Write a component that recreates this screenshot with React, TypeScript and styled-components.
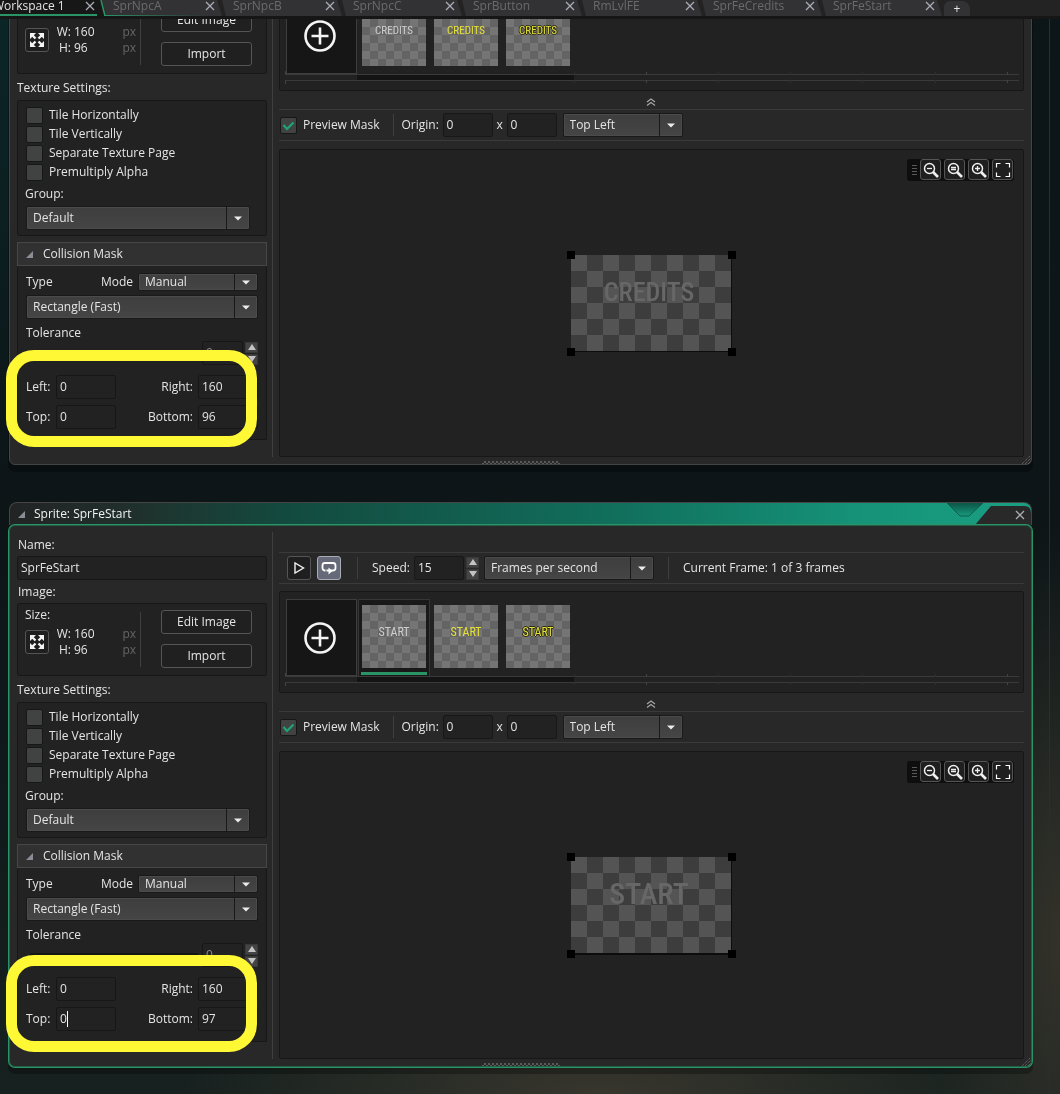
import React, { useId, useState } from "react";
import styled, { createGlobalStyle, css } from "styled-components";

const c = {
  text: "#e4e4e4",
  dim: "#6a6a6c",
  body: "#282828",
  panel: "#222222",
  edge: "#171717",
  line: "#3f3f3f",
  green: "#2b9467",
  yellow: "#fff835",
};

const Global = createGlobalStyle`
  * { box-sizing: border-box; }
  body {
    margin: 0;
    background: #0c1618;
    color: ${c.text};
    font-family: "Open Sans", "Noto Sans", sans-serif;
    font-size: 12px;
    line-height: 16px;
  }
  button, input, select { font: inherit; color: inherit; margin: 0; }
`;

/* ---------- shell ---------- */

const Page = styled.div`
  height: 100vh;
  display: flex;
  flex-direction: column;
  overflow: hidden;
`;

const TabBar = styled.nav`
  position: relative;
  z-index: 2;
  flex: none;
  display: flex;
  height: 19px;
  background: #232323;
  border-bottom: 3px solid #161616;
  overflow: hidden;
`;

const Tab = styled.div<{ $active?: boolean }>`
  flex: none;
  display: flex;
  align-items: center;
  justify-content: space-between;
  width: ${(p) => (p.$active ? 102 : 120)}px;
  height: 16px;
  padding: 0 7px 4px 11px;
  background: #323235;
  color: ${c.dim};
  white-space: nowrap;
  clip-path: polygon(0 0, calc(100% - 5px) 0, 100% 100%, 4px 100%);
  ${(p) =>
    p.$active &&
    css`
      padding: 0 7px 2px 0;
      background: #171718;
      color: ${c.text};
      border-bottom: 2px solid ${c.green};
      clip-path: polygon(0 0, 100% 0, 100% 100%, 0 100%);
    `}
`;

const ActiveEdge = styled.svg`
  position: absolute;
  left: 97px;
  top: 0;
`;

const TabName = styled.a<{ $shift?: boolean }>`
  color: inherit;
  text-decoration: none;
  margin-left: ${(p) => (p.$shift ? -7 : 0)}px;
`;

const PlainButton = styled.button`
  display: grid;
  place-items: center;
  padding: 0;
  border: 0;
  background: none;
  cursor: pointer;
`;

const AddTab = styled(PlainButton)`
  width: 26px;
  height: 15px;
  margin: 1px 0 0 2px;
  padding-bottom: 2px;
  background: #323235;
  border-radius: 6px 8px 0 0;
`;

const Workspace = styled.main`
  position: relative;
  flex: 1;
  overflow: hidden;
  margin-right: 10px;
  border-right: 1px solid #26302f;
`;

const Backdrop = styled.div`
  position: fixed;
  inset: 0;
  z-index: -1;
  background:
    radial-gradient(ellipse 420px 120px at 600px 100%, #38362d 0%, transparent 100%),
    radial-gradient(ellipse 130px 420px at 100% 86%, #33322a 0%, transparent 100%),
    radial-gradient(ellipse 180px 480px at 0 0, #0b2628 0%, transparent 100%),
    linear-gradient(180deg, #0c1618 0%, #0d1517 50%, #17211f 100%);
`;

/* ---------- windows ---------- */

const WindowFrame = styled.section`
  position: absolute;
  left: 9px;
  right: 17px;
`;

const TitleBar = styled.header<{ $active?: boolean }>`
  display: grid;
  grid-template-columns: 1fr 85px;
  height: 23px;
  border: 1px solid #454545;
  border-bottom: 0;
  border-radius: 8px 8px 0 0;
  overflow: hidden;
  background: ${(p) =>
    p.$active
      ? "linear-gradient(90deg, #222424 0%, #20302c 12%, #134a3f 27%, #11705d 60%, #159177 82%, #1a9f83 100%)"
      : "#2a2a2a"};
`;

const TitleText = styled.h2`
  display: flex;
  align-items: center;
  gap: 9px;
  margin: 0;
  padding-left: 8px;
  font-size: 12px;
  font-weight: 400;
  color: #f2f2f2;
`;

const TitleEnd = styled.div`
  display: grid;
  > * { grid-area: 1 / 1; }
  > button { justify-self: end; align-self: center; margin: 2px 6px 0 0; }
  > svg { display: block; }
`;

const Body = styled.div<{ $active?: boolean }>`
  position: relative;
  display: flex;
  height: 542px;
  padding: 6px 7px 7px;
  background: ${c.body};
  border: 1px solid ${(p) => (p.$active ? "#215f47" : "#444646")};
  border-radius: 6px;
  box-shadow: ${(p) => (p.$active ? `0 0 0 1px ${c.green}, ` : "")} 0 6px 0 1px rgba(0, 0, 0, 0.28);
`;

const Side = styled.div`
  flex: none;
  width: 256px;
  padding: 3px 5px 0 0;
  border-right: 1px solid ${c.line};
`;

const Main = styled.div`
  flex: 1;
  min-width: 0;
  display: flex;
  flex-direction: column;
  margin-left: 6px;
  padding-top: 20px;
`;

const Heading = styled.label`
  display: block;
  padding: 2px 0 3px 1px;
`;

const Field = styled.input<{ $w?: string; $dim?: boolean }>`
  display: block;
  width: ${(p) => p.$w ?? "100%"};
  height: 24px;
  padding: 0 3px 1px;
  background: ${c.panel};
  color: ${(p) => (p.$dim ? "#8c8c8c" : c.text)};
  border: 1px solid ${c.edge};
  border-radius: 2px;
  outline: 0;
`;

const Panel = styled.div`
  background: ${c.panel};
  border: 1px solid ${c.edge};
  border-radius: 2px;
`;

const ImagePanel = styled(Panel)`
  display: flex;
  height: 73px;
  margin-bottom: 4px;
  padding: 3px 0 0 7px;
`;

const TextureHeading = styled.h3`
  margin: 0;
  padding: 2px 0 4px;
  font-size: 12px;
  font-weight: 400;
`;

const SizeBlock = styled.div`
  width: 115px;
  padding-right: 4px;
`;

const SizeRow = styled.div`
  display: flex;
  align-items: center;
  margin-top: 3px;
`;

const SquareButton = styled(PlainButton)<{ $on?: boolean; $size?: number }>`
  flex: none;
  width: ${(p) => p.$size ?? 24}px;
  height: ${(p) => p.$size ?? 24}px;
  border: 1px solid ${(p) => (p.$on ? "#a9abb5" : "#555")};
  border-radius: 3px;
  background: ${(p) => (p.$on ? "#666a78" : "#1f1f1f")};
`;

const Dimensions = styled.dl`
  flex: 1;
  display: grid;
  grid-template-columns: 22px 1fr auto;
  column-gap: 3px;
  margin: 0;
  dt { text-align: right; }
  dd { margin: 0; }
`;

const Unit = styled.dd`
  color: #666;
`;

const Rule = styled.i<{ $h: number; $gap?: string }>`
  flex: none;
  width: 1px;
  height: ${(p) => p.$h}px;
  margin: ${(p) => p.$gap ?? "0"};
  background: ${c.line};
`;

const ButtonStack = styled.div`
  display: flex;
  flex-direction: column;
  gap: 10px;
  padding: 3px 0 0 20px;
`;

const OutlineButton = styled.button`
  width: 91px;
  height: 24px;
  padding: 0 0 1px;
  background: #202020;
  border: 1px solid #555;
  border-radius: 3px;
  cursor: pointer;
`;

const TexturePanel = styled(Panel)`
  margin-bottom: 6px;
  padding: 5px 16px 5px 8px;
`;

const GroupLabel = styled.label`
  display: block;
  padding: 4px 0;
  margin-left: -1px;
`;

const CheckLabel = styled.label`
  display: flex;
  align-items: center;
  gap: 6px;
  height: 19px;
  cursor: pointer;
`;

const CheckText = styled.span`
  padding-bottom: 1px;
`;

const CheckCell = styled.span`
  display: grid;
  > * { grid-area: 1 / 1; }
  > svg { place-self: center; pointer-events: none; }
`;

const CheckBox = styled.input`
  appearance: none;
  width: 17px;
  height: 17px;
  background: #414242;
  border: 1px solid ${c.edge};
  border-radius: 2px;
`;

const SelectCell = styled.span<{ $w: string }>`
  flex: none;
  display: grid;
  width: ${(p) => p.$w};
  > * { grid-area: 1 / 1; }
`;

const SelectBox = styled.select<{ $h?: number }>`
  appearance: none;
  width: 100%;
  height: ${(p) => p.$h ?? 24}px;
  padding: 0 28px 1px 6px;
  background: linear-gradient(#3e3e3e, #454545);
  border: 1px solid #191919;
  border-radius: 2px;
  box-shadow: inset 0 0 0 1px #4b4b4b;
`;

const SelectArrow = styled.span`
  justify-self: end;
  display: grid;
  place-items: center;
  width: 24px;
  padding-right: 1px;
  border-left: 1px solid #191919;
  pointer-events: none;
`;

const CollisionHead = styled(PlainButton)`
  display: flex;
  align-items: center;
  gap: 10px;
  width: 100%;
  height: 24px;
  padding: 0 0 0 8px;
  background: #313131;
  border: 1px solid #474747;
`;

const CollisionBody = styled(Panel)`
  border-top: 0;
  padding: 7px 8px 10px 8px;
`;

const Row = styled.div<{ $mt?: number }>`
  display: flex;
  align-items: center;
  margin-top: ${(p) => p.$mt ?? 0}px;
`;

const ModeLabel = styled.label`
  margin: 0 5px 0 auto;
`;

const ToleranceLabel = styled.label`
  display: block;
  margin-top: 6px;
`;

const Slider = styled.input`
  appearance: none;
  width: 168px;
  height: 4px;
  margin: 0 4px;
  background: #151515;
  &::-webkit-slider-thumb { appearance: none; width: 0; }
`;

const SpinnerBox = styled.span`
  flex: none;
  display: grid;
  gap: 1px;
  margin-left: 2px;
`;

const SpinButton = styled(PlainButton)`
  width: 13px;
  height: 11px;
  background: #444;
  border: 1px solid #383838;
`;

const BoundsGrid = styled.div`
  display: grid;
  grid-template-columns: 30px 60px 1fr 60px;
  row-gap: 6px;
  align-items: center;
  margin-top: 10px;
`;

const BoundsLabel = styled.label<{ $end?: boolean }>`
  text-align: ${(p) => (p.$end ? "right" : "left")};
  padding-right: ${(p) => (p.$end ? 5 : 0)}px;
`;

const CaretCell = styled.span`
  position: relative;
`;

const Caret = styled.i`
  position: absolute;
  left: 11px;
  top: 4px;
  width: 1px;
  height: 16px;
  background: #fff;
`;

const Callout = styled.div<{ $top: number }>`
  position: absolute;
  z-index: 1;
  left: -3px;
  top: ${(p) => p.$top}px;
  width: 251px;
  height: 97px;
  border: 11px solid ${c.yellow};
  border-radius: 28px;
  pointer-events: none;
`;

/* ---------- main column ---------- */

const Toolbar = styled.div<{ $pad: number }>`
  flex: none;
  display: flex;
  align-items: center;
  height: 32px;
  padding-left: ${(p) => p.$pad}px;
  border-top: 1px solid #3a3a3a;
  border-bottom: 1px solid #3a3a3a;
  white-space: nowrap;
`;

const ToolLabel = styled.label<{ $w?: number }>`
  flex: none;
  width: ${(p) => (p.$w ? `${p.$w}px` : "auto")};
`;

const Gap = styled.i<{ $w: number }>`
  flex: none;
  width: ${(p) => p.$w}px;
`;

const FramesPanel = styled(Panel)`
  flex: none;
  height: 102px;
  margin-top: 7px;
  padding: 7px 4px 0 5px;
`;

const Strip = styled.div`
  display: flex;
  height: 77px;
  padding-left: 1px;
`;

const AddFrame = styled(PlainButton)`
  width: 71px;
  height: 77px;
  margin-right: 1px;
  padding-right: 3px;
  background: #161616;
  border: 1px solid #3d3d3d;
`;

const FrameCell = styled.div<{ $on?: boolean }>`
  width: 72px;
  height: 77px;
  padding: 5px 3px 0;
  border: 1px solid ${(p) => (p.$on ? "#363636" : "transparent")};
  border-bottom: 0;
  background: ${(p) => (p.$on ? "#191919" : "transparent")};
`;

const Thumb = styled.div<{ $kind: number; $size: number }>`
  display: grid;
  place-items: center;
  width: 64px;
  height: 63px;
  padding-bottom: 9px;
  background: repeating-conic-gradient(#646464 0 25%, #757575 0 50%) 0 0 / 16px 16px;
  font: ${(p) => p.$size}px "Roboto Condensed", "Open Sans", sans-serif;
  color: ${(p) => (p.$kind === 0 ? "#cfcfcf" : "#e6e23a")};
  ${(p) =>
    p.$kind === 2 &&
    css`
      text-shadow: -1px 0 #2c2c14, 1px 0 #2c2c14, 0 1px #2c2c14, 0 -1px #2c2c14;
    `}
`;

const FrameMark = styled.div`
  width: 66px;
  height: 3px;
  margin: 4px 0 0 -1px;
  background: ${c.green};
`;

const RulerSvg = styled.svg`
  display: block;
  width: 100%;
  height: 13px;
  margin-top: -3px;
`;

const Collapse = styled(PlainButton)`
  flex: none;
  height: 18px;
  padding: 4px 2px 0 0;
`;

const Preview = styled(Panel)`
  position: relative;
  flex: 1;
  display: grid;
  place-items: center;
  margin-top: 8px;
  padding-right: 1px;
`;

const ZoomBar = styled.div`
  position: absolute;
  top: 9px;
  right: 9px;
  display: flex;
  align-items: center;
  gap: 3px;
  padding: 0 1px 1px 5px;
  background: #0e0e0e;
  border-radius: 3px;
`;

const Sprite = styled.div<{ $size: number }>`
  position: relative;
  width: 160px;
  height: 96px;
  padding: 19px 4px 0 0;
  background: repeating-conic-gradient(#3d3d3d 0 25%, #545454 0 50%) 0 0 / 32px 32px;
  font: 500 ${(p) => p.$size}px/36px "Roboto Condensed", "Open Sans", sans-serif;
  text-align: center;
  color: #676767;
`;

const Mask = styled.div<{ $h: number }>`
  position: absolute;
  left: 0;
  top: 0;
  width: 161px;
  height: ${(p) => p.$h}px;
  border: solid #0d0d0d;
  border-width: 0 1px ${(p) => p.$h - 96}px 0;
`;

const Handle = styled.i<{ $x: "left" | "right"; $y: "top" | "bottom" }>`
  position: absolute;
  ${(p) => p.$x}: ${(p) => (p.$x === "left" ? -4 : -5)}px;
  ${(p) => p.$y}: ${(p) => (p.$y === "top" ? -4 : -5)}px;
  width: 8px;
  height: 8px;
  background: #000;
`;

const BottomGrip = styled.i`
  position: absolute;
  left: 50%;
  bottom: 0;
  width: 78px;
  height: 3px;
  margin-left: -39px;
  background: repeating-conic-gradient(#5a5a5a 0 25%, transparent 0 50%) 0 0 / 4px 4px;
`;

const CornerGrip = styled.svg`
  position: absolute;
  right: 0;
  bottom: 0;
`;

/* ---------- icons ---------- */

const Cross = ({ size = 10 }: { size?: number }) => (
  <svg width={size} height={size} viewBox="0 0 10 10" stroke="#a9acb4" strokeWidth="1.3" fill="none">
    <path d="M1 1l8 8M9 1l-8 8" />
  </svg>
);

const Corner = () => (
  <svg width="7" height="7" viewBox="0 0 7 7">
    <path d="M7 0v7H0z" fill="#8a8d96" />
  </svg>
);

const Down = () => (
  <svg width="8" height="5" viewBox="0 0 8 5">
    <path d="M0 0.5h8L4 4.5z" fill="#ececec" />
  </svg>
);

const Triangle = ({ up }: { up?: boolean }) => (
  <svg width="8" height="6" viewBox="0 0 8 6">
    <path d={up ? "M0 6L4 0l4 6z" : "M0 0h8L4 6z"} fill="#c4c4c4" />
  </svg>
);

const Expand = () => (
  <svg width="14" height="14" viewBox="0 0 14 14" fill="#f4f4f4" stroke="#f4f4f4" strokeWidth="2.4">
    <path
      stroke="none"
      d="M0 0h6L0 6zM14 0H8l6 6zM0 14h6L0 8zM14 14H8l6-6z"
    />
    <path d="M2 2l3.500 3.500M12 2L8.500 5.500M2 12l3.500-3.500M12 12L8.500 8.500" />
  </svg>
);

const Play = () => (
  <svg width="12" height="14" viewBox="0 0 12 14" fill="none" stroke="#f0f0f0" strokeWidth="1.4">
    <path d="M2 2v10l8.500-5z" />
  </svg>
);

const Loop = () => (
  <svg width="16" height="14" viewBox="0 0 16 14" fill="none" stroke="#fff" strokeWidth="1.800">
    <path d="M4.500 9.500H4A2.500 2.500 0 0 1 1.500 7V4.500A2.500 2.500 0 0 1 4 2h8a2.500 2.500 0 0 1 2.500 2.500V7A2.500 2.500 0 0 1 12 9.500H5.500" />
    <path d="M7.500 6.500v7l4-3.500z" fill="#fff" stroke="none" />
  </svg>
);

const Plus = () => (
  <svg width="32" height="32" viewBox="0 0 32 32" fill="none" stroke="#f4f4f4" strokeWidth="2.600">
    <circle cx="16" cy="16" r="14.500" />
    <path d="M16 7.500v17M7.500 16h17" />
  </svg>
);

const Tick = () => (
  <svg width="13" height="11" viewBox="0 0 13 11" fill="none" stroke="#1fa473" strokeWidth="2.200">
    <path d="M1.500 5l3.500 4 6.500-6.500" />
  </svg>
);

const Chevrons = () => (
  <svg width="10" height="8" viewBox="0 0 10 8" fill="none" stroke="#a8a8a8" strokeWidth="1.100">
    <path d="M1 4l4-3 4 3M1 7.500l4-3 4 3" />
  </svg>
);

const Lens = ({ mark }: { mark: string }) => (
  <svg width="16" height="16" viewBox="0 0 16 16" fill="none" stroke="#efefef">
    <circle cx="6.500" cy="6.500" r="5" strokeWidth="1.500" />
    <path d="M10 10l5 5" strokeWidth="2.600" />
    <path d={mark} strokeWidth="1.300" />
  </svg>
);

const Fit = () => (
  <svg width="16" height="16" viewBox="0 0 16 16" fill="none" stroke="#fff" strokeWidth="1.200">
    <path d="M1.500 5.500v-4h4M10.500 1.500h4v4M14.500 10.500v4h-4M5.500 14.500h-4v-4" />
  </svg>
);

const Bars = () => (
  <svg width="5" height="12" viewBox="0 0 5 12" stroke="#5a5a5a">
    <path d="M0 1.500h5M0 4.500h5M0 7.500h5M0 10.500h5" />
  </svg>
);

const TitleNotch = () => (
  <svg width="85" height="22" viewBox="0 0 85 22">
    <defs>
      <linearGradient id="notch" x1="0" y1="0" x2="0" y2="1">
        <stop offset="0" stopColor="#0b5345" />
        <stop offset="1" stopColor="#189a7e" />
      </linearGradient>
    </defs>
    <path d="M1 0L14 13h9L37 0z" fill="url(#notch)" stroke="#0d5f4f" />
    <path d="M29 22L45 3h33q7 0 7 7v12z" fill="#292929" />
  </svg>
);

const Ruler = () => (
  <RulerSvg>
    <rect x="72" y="4" width="217" height="5" fill="#141414" />
    <path d="M.5 0v4M.5 9v4" stroke="#444" />
    <rect y="3" width="100%" height="1" fill="#3a3a3a" />
    <rect y="9" width="100%" height="1" fill="#3a3a3a" />
    {[289, 361, 433, 505, 577, 650, 722].map((x) => (
      <path
        key={x}
        d={`M${x + 0.5} 1v3M${x + 0.5} 9v3`}
        stroke={x === 361 || x === 722 ? "#444" : "#2e2e2e"}
      />
    ))}
  </RulerSvg>
);

/* ---------- controls ---------- */

type SelectProps = { id: string; label: string; value: string; width: string; height?: number };

const Select = ({ id, label, value, width, height }: SelectProps) => (
  <SelectCell $w={width}>
    <SelectBox id={id} aria-label={label} $h={height}>
      <option>{value}</option>
    </SelectBox>
    <SelectArrow>
      <Down />
    </SelectArrow>
  </SelectCell>
);

const Check = ({ label, checked = false }: { label: string; checked?: boolean }) => {
  const [on, setOn] = useState(checked);
  return (
    <CheckLabel>
      <CheckCell>
        <CheckBox type="checkbox" checked={on} onChange={() => setOn(!on)} />
        {on && <Tick />}
      </CheckCell>
      <CheckText>{label}</CheckText>
    </CheckLabel>
  );
};

const Spinner = () => (
  <SpinnerBox>
    <SpinButton aria-label="Increase">
      <Triangle up />
    </SpinButton>
    <SpinButton aria-label="Decrease">
      <Triangle />
    </SpinButton>
  </SpinnerBox>
);

/* ---------- sprite window ---------- */

type WindowProps = {
  name: string;
  caption: string;
  thumbSize: number;
  spriteSize: number;
  bottom: number;
  top: number;
  calloutTop: number;
  active?: boolean;
};

const SpriteWindow = (p: WindowProps) => {
  const id = useId();
  const [frame, setFrame] = useState(p.active ? 0 : -1);
  return (
    <WindowFrame style={{ top: p.top }}>
      <TitleBar $active={p.active}>
        <TitleText>
          <Corner />
          Sprite: {p.name}
        </TitleText>
        <TitleEnd>
          <TitleNotch />
          <PlainButton aria-label="Close">
            <Cross />
          </PlainButton>
        </TitleEnd>
      </TitleBar>
      <Body $active={p.active}>
        <Side>
          <Heading htmlFor={id + "name"}>Name:</Heading>
          <Field id={id + "name"} defaultValue={p.name} />
          <Row $mt={2}>
            <Heading as="span">Image:</Heading>
          </Row>
          <ImagePanel>
            <SizeBlock>
              Size:
              <SizeRow>
                <SquareButton aria-label="Resize">
                  <Expand />
                </SquareButton>
                <Dimensions>
                  <dt>W:</dt>
                  <dd>160</dd>
                  <Unit>px</Unit>
                  <dt>H:</dt>
                  <dd>96</dd>
                  <Unit>px</Unit>
                </Dimensions>
              </SizeRow>
            </SizeBlock>
            <Rule $h={55} $gap="5px 0 0" />
            <ButtonStack>
              <OutlineButton>Edit Image</OutlineButton>
              <OutlineButton>Import</OutlineButton>
            </ButtonStack>
          </ImagePanel>
          <TextureHeading>Texture Settings:</TextureHeading>
          <TexturePanel>
            <Check label="Tile Horizontally" />
            <Check label="Tile Vertically" />
            <Check label="Separate Texture Page" />
            <Check label="Premultiply Alpha" />
            <GroupLabel htmlFor={id + "group"}>Group:</GroupLabel>
            <Select id={id + "group"} label="Group" value="Default" width="100%" />
          </TexturePanel>
          <CollisionHead>
            <Corner />
            Collision Mask
          </CollisionHead>
          <CollisionBody>
            <Row>
              <label htmlFor={id + "type"}>Type</label>
              <ModeLabel htmlFor={id + "mode"}>Mode</ModeLabel>
              <Select id={id + "mode"} label="Mode" value="Manual" width="120px" height={18} />
            </Row>
            <Row $mt={4}>
              <Select id={id + "type"} label="Type" value="Rectangle (Fast)" width="100%" />
            </Row>
            <ToleranceLabel htmlFor={id + "tol"}>Tolerance</ToleranceLabel>
            <Row>
              <Slider id={id + "tol"} type="range" defaultValue={0} />
              <Field $w="41px" $dim aria-label="Tolerance value" defaultValue="0" />
              <Spinner />
            </Row>
            <BoundsGrid>
              <BoundsLabel htmlFor={id + "l"}>Left:</BoundsLabel>
              <Field id={id + "l"} defaultValue="0" />
              <BoundsLabel $end htmlFor={id + "r"}>Right:</BoundsLabel>
              <Field id={id + "r"} defaultValue="160" />
              <BoundsLabel htmlFor={id + "t"}>Top:</BoundsLabel>
              <CaretCell>
                <Field id={id + "t"} defaultValue="0" />
                {p.active && <Caret />}
              </CaretCell>
              <BoundsLabel $end htmlFor={id + "b"}>Bottom:</BoundsLabel>
              <Field id={id + "b"} defaultValue={String(p.bottom)} />
            </BoundsGrid>
          </CollisionBody>
        </Side>
        <Main>
          <Toolbar $pad={8}>
            <SquareButton aria-label="Play">
              <Play />
            </SquareButton>
            <Gap $w={6} />
            <SquareButton $on aria-label="Loop">
              <Loop />
            </SquareButton>
            <Rule $h={22} $gap="0 14px 0 16px" />
            <ToolLabel $w={42} htmlFor={id + "speed"}>Speed:</ToolLabel>
            <Field $w="50px" id={id + "speed"} defaultValue="15" />
            <Spinner />
            <Gap $w={5} />
            <Select id={id + "unit"} label="Speed unit" value="Frames per second" width="170px" />
            <Rule $h={22} $gap="0 14px" />
            <span>Current Frame: 1 of 3 frames</span>
          </Toolbar>
          <FramesPanel>
            <Strip>
              <AddFrame aria-label="Add frame">
                <Plus />
              </AddFrame>
              {[0, 1, 2].map((k) => (
                <FrameCell key={k} $on={frame === k} onClick={() => setFrame(k)}>
                  <Thumb $kind={k} $size={p.thumbSize}>{p.caption}</Thumb>
                  {frame === k && <FrameMark />}
                </FrameCell>
              ))}
            </Strip>
            <Ruler />
          </FramesPanel>
          <Collapse aria-label="Collapse frames">
            <Chevrons />
          </Collapse>
          <Toolbar $pad={1}>
            <Check label="Preview Mask" checked />
            <Rule $h={22} $gap="0 8px 0 13px" />
            <ToolLabel $w={41} htmlFor={id + "ox"}>Origin:</ToolLabel>
            <Field $w="50px" id={id + "ox"} defaultValue="0" />
            <Gap $w={4} />
            <ToolLabel $w={10} htmlFor={id + "oy"}>x</ToolLabel>
            <Field $w="50px" id={id + "oy"} defaultValue="0" />
            <Gap $w={6} />
            <Select id={id + "anchor"} label="Origin anchor" value="Top Left" width="120px" />
          </Toolbar>
          <Preview>
            <Sprite $size={p.spriteSize}>
              {p.caption}
              <Mask $h={p.bottom + 1}>
                <Handle $x="left" $y="top" />
                <Handle $x="right" $y="top" />
                <Handle $x="left" $y="bottom" />
                <Handle $x="right" $y="bottom" />
              </Mask>
            </Sprite>
            <ZoomBar>
              <Bars />
              <SquareButton $size={21} aria-label="Zoom out">
                <Lens mark="M4 6.500h5" />
              </SquareButton>
              <SquareButton $size={21} aria-label="Reset zoom">
                <Lens mark="M4 5.500h5M4 7.500h5" />
              </SquareButton>
              <SquareButton $size={21} aria-label="Zoom in">
                <Lens mark="M4 6.500h5M6.500 4v5" />
              </SquareButton>
              <SquareButton $size={21} aria-label="Fit">
                <Fit />
              </SquareButton>
            </ZoomBar>
          </Preview>
        </Main>
        <BottomGrip />
        <CornerGrip width="10" height="9" viewBox="0 0 10 9" stroke="#777" strokeDasharray="1 1">
          <path d="M1 9l8-8M4 9l6-6M7 9l3-3" />
        </CornerGrip>
      </Body>
      <Callout $top={p.calloutTop} />
    </WindowFrame>
  );
};

const tabs = ["SprNpcA", "SprNpcB", "SprNpcC", "SprButton", "RmLvlFE", "SprFeCredits", "SprFeStart"];

export default function App() {
  return (
    <Page>
      <Global />
      <Backdrop />
      <TabBar>
        <Tab $active>
          <TabName $shift href="#workspace">Workspace 1</TabName>
          <PlainButton aria-label="Close tab">
            <Cross />
          </PlainButton>
        </Tab>
        {tabs.map((t) => (
          <Tab key={t}>
            <TabName href={"#" + t}>{t}</TabName>
            <PlainButton aria-label="Close tab">
              <Cross />
            </PlainButton>
          </Tab>
        ))}
        <AddTab aria-label="New tab">+</AddTab>
        <ActiveEdge width="110" height="17" viewBox="0 0 110 17">
          <defs>
            <linearGradient id="edge" x1="0" x2="1" y1="0" y2="0">
              <stop offset="0" stopColor="#2b9467" />
              <stop offset="1" stopColor="#2b9467" stopOpacity="0" />
            </linearGradient>
          </defs>
          <path d="M0 0h4l4 17H0z" fill="#171718" />
          <path d="M4 0l4 16" stroke="#2b9467" strokeWidth="1.5" />
          <rect x="7" y="15" width="100" height="1" fill="url(#edge)" />
        </ActiveEdge>
      </TabBar>
      <Workspace>
        <SpriteWindow
          name="SprFeCredits"
          caption="CREDITS"
          thumbSize={11}
          spriteSize={26}
          bottom={96}
          top={-119}
          calloutTop={450}
        />
        <SpriteWindow
          name="SprFeStart"
          caption="START"
          thumbSize={12}
          spriteSize={30}
          bottom={97}
          top={483}
          calloutTop={453}
          active
        />
      </Workspace>
    </Page>
  );
}
